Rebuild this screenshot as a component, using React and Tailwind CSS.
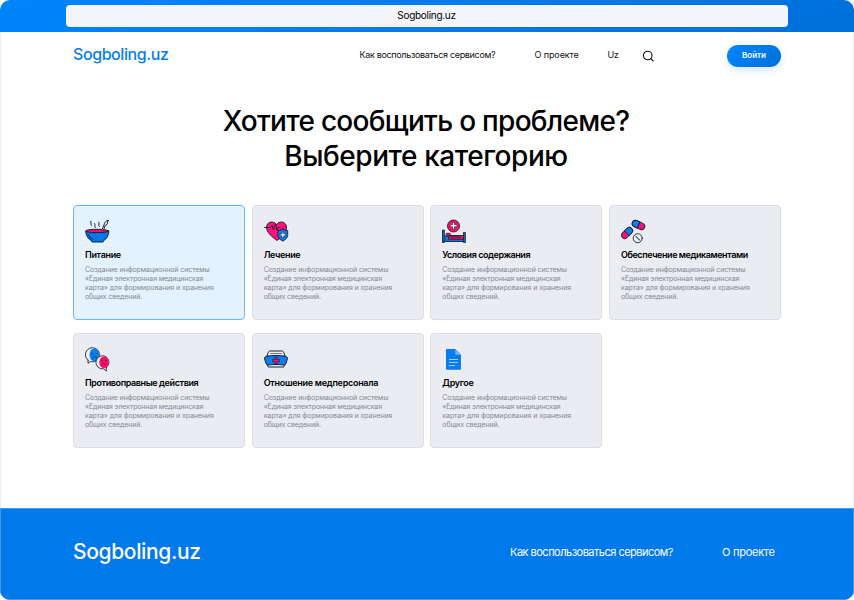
import React from "react";

function BowlIcon() {
  return (
    <svg width="26" height="26" viewBox="0 0 26 26" fill="none" stroke="#16202e" strokeWidth="1" strokeLinecap="round" strokeLinejoin="round">
      <path d="M.7 12.500C1 17 3.500 20.300 6.500 21.700L7 23h11l.5-1.300c3-1.500 5-4.700 5.300-9.200Z" fill="#007AEA" />
      <ellipse cx="12.200" cy="12" rx="11.500" ry="1.700" fill="#FF0F6B" />
      <path d="M5.500 2c2 1-1 2.500 1 4.500M9.500 4.500c2 1-1 2 .8 4M13.500 3c2 1-1 2.500.8 4.500" />
      <path d="M16.800 11 19 6c.5-2.500 2-4.500 4.500-4.700-1 .8-.8 2.700-1.300 3.700-.5 1-1.200 1.500-2 1.500l-1.700 4.500" fill="#EAF4FF" />
      <path d="M3.200 15.500c1 2.500 2.500 3.900 4.500 4.900" />
    </svg>
  );
}

function HeartIcon() {
  return (
    <svg width="26" height="26" viewBox="0 0 26 26" stroke="#16202e" strokeWidth=".9" strokeLinecap="round" strokeLinejoin="round">
      <path d="M12.500 5.500C10 1.500 3 2 2.500 8c-.3 5 5 9.500 10.500 13.500C18.500 18 23 13 22.500 8 22 2 15 1.500 12.500 5.500Z" fill="#FF0F7B" />
      <path d="M.5 8.500h6l1.500-2 1.500 4.500 2-6 1.500 6 1.200-2.500h1.800" fill="none" />
      <path d="M18.800 10c-1.500 1.200-3 1.500-4.900 1.600v5c.4 2.500 2.600 4.500 4.900 5.500 2.300-1 4.500-3 4.900-5.500v-5c-1.900-.1-3.400-.4-4.900-1.600Z" fill="#0A7BE8" />
      <path d="M18 13.200h1.700V15h1.800v1.700h-1.800v1.800H18v-1.800h-1.800V15H18Z" fill="#fff" strokeWidth=".5" />
    </svg>
  );
}

function BedIcon() {
  return (
    <svg width="26" height="26" viewBox="0 0 26 26" stroke="#16202e" strokeWidth=".9" strokeLinejoin="round">
      <circle cx="11.500" cy="7" r="6" fill="#FF0F6B" />
      <path d="M10.500 3.500h2v2.300H15v2h-2.500V10h-2V7.800H8.200v-2h2.300Z" fill="#fff" strokeWidth=".6" />
      <path d="M2.300 17h19.200v5.500H2.300Z" fill="#007AEA" />
      <path d="M.5 11h1.800v12.500H.5ZM21.500 13.500h1.800v10h-1.800Z" fill="#007AEA" />
      <rect x="4" y="14.300" width="4.500" height="2.700" rx="1.200" fill="#FF0F6B" />
      <path d="M7 16.500h14.500v3.700H6.500Z" fill="#FF0F6B" />
      <path d="M8 18h11" fill="none" />
    </svg>
  );
}

function PillsIcon() {
  return (
    <svg width="26" height="26" viewBox="0 0 26 26" stroke="#16202e" strokeWidth=".9" strokeLinecap="round">
      <g transform="rotate(25 17.500 6)">
        <rect x="10.900" y="2.700" width="13.200" height="6.600" rx="3.300" fill="#FF0F7B" />
        <path d="M17.600 2.700v6.600h-3.400a3.300 3.300 0 0 1 0-6.600Z" fill="#087DF0" />
      </g>
      <g transform="rotate(-45 6 14)">
        <rect x="-.6" y="10.700" width="13.200" height="6.600" rx="3.300" fill="#FF0F7B" />
        <path d="M6 10.700h3.300a3.300 3.300 0 0 1 0 6.600H6Z" fill="#087DF0" />
      </g>
      <circle cx="16.700" cy="19.200" r="4.500" fill="#EBEDF2" />
      <path d="m15.200 17.200 3.500 3.500M14.700 17.700l3.500 3.500" fill="none" strokeWidth=".6" />
    </svg>
  );
}

function ChatIcon() {
  return (
    <svg width="26" height="26" viewBox="0 0 26 26" stroke="#16202e" strokeWidth=".9" strokeLinecap="round" strokeLinejoin="round">
      <path d="M3 13.200v3l2.500-1.700a7 7 0 1 0-2.500-1.300Z" fill="#EEF3FA" />
      <ellipse cx="9.300" cy="7.800" rx="4.800" ry="6.400" fill="#087DF0" stroke="none" />
      <path d="m6.500 6 1.500.8m3 0 1.500-.8M7.500 10.500c1.300-1.300 2.900-1.300 4.200 0" fill="none" strokeWidth=".6" />
      <path d="M21.300 20.600V24l-2.500-2.300a6.500 6.500 0 1 1 2.500-1.100Z" fill="#EEF3FA" />
      <ellipse cx="18.900" cy="15.400" rx="4.600" ry="5.900" fill="#FF0F6B" stroke="none" />
      <path d="m15.800 13.300 1.400.8m3 0 1.400-.8M16.700 17.700c1.300-1.200 2.700-1.200 4 0" fill="none" strokeWidth=".6" />
    </svg>
  );
}

function NurseCapIcon() {
  return (
    <svg width="26" height="26" viewBox="0 0 26 26" stroke="#16202e" strokeWidth="1" strokeLinecap="round" strokeLinejoin="round">
      <path d="m3 9 1.300-3.700c.4-1 1-1.300 2-1.300h11.400c1 0 1.600.3 2 1.300L21 9Z" fill="#EEF3FA" />
      <path d="M6.500 6.500h11" fill="none" strokeWidth=".6" />
      <path d="M3 16.500 4.300 20h15.400l1.300-3.500Z" fill="#EEF3FA" />
      <path d="M.5 11.500c0-1.300.8-2 2-2.200 6-1.100 13-1.100 19 0 1.200.2 2 .9 2 2.200l-1.700 5.300c-.3 1-.9 1.300-1.900 1.200-5.300-.6-10.500-.6-15.800 0-1 .1-1.600-.2-1.900-1.200Z" fill="#087DF0" />
      <path d="M11 10.300h2.200v2.200h2.300v2.200h-2.300V17H11v-2.300H8.700v-2.200H11Z" fill="#FF0F6B" strokeWidth=".6" />
    </svg>
  );
}

function FileIcon() {
  return (
    <svg width="26" height="26" viewBox="0 0 26 26">
      <path d="M4 2h9.300L19 7.700V22a.8.8 0 0 1-.8.800H4.800A.8.800 0 0 1 4 22Z" fill="#087DF0" />
      <path d="M13.300 2 19 7.700h-5.700Z" fill="#6BB5FF" />
      <path d="M7 12.500h9M7 15.500h9M7 18.500h5.500" stroke="#9DCEFF" strokeWidth="1" fill="none" />
    </svg>
  );
}

const categories = [
  { title: "Питание", Icon: BowlIcon, track: "tracking-[-0.32px]", active: true },
  { title: "Лечение", Icon: HeartIcon, track: "tracking-[-0.36px]" },
  { title: "Условия содержания", Icon: BedIcon, track: "tracking-[-0.43px]" },
  { title: "Обеспечение медикаментами", Icon: PillsIcon, track: "tracking-[-0.43px]" },
  { title: "Противоправные действия", Icon: ChatIcon, track: "tracking-[-0.4px]" },
  { title: "Отношение медперсонала", Icon: NurseCapIcon, track: "tracking-[-0.28px]" },
  { title: "Другое", Icon: FileIcon, track: "tracking-[-0.3px]" },
];

function CategoryCard({ title, Icon, track, active }) {
  return (
    <div className={`h-[115px] rounded-[4px] border pl-[11px] pt-[13px] ${active ? "border-[#6BB5FA] bg-[#E4F2FE]" : "border-[#DADCE6] bg-[#EBECF2]"}`}>
      <Icon />
      <h2 className={`mt-[4px] whitespace-nowrap text-[9px] font-semibold leading-[12px] text-black ${track}`}>{title}</h2>
      <p className="mt-[4px] whitespace-nowrap text-[7px] leading-[9px] text-[#858993]">
        <span className="block tracking-[-0.09px]">Создание информационной системы</span>
        <span className="block tracking-[-0.14px]">«Единая электронная медицинская</span>
        <span className="block tracking-[-0.08px]">карта» для формирования и хранения</span>
        <span className="block tracking-[-0.13px]">общих сведений.</span>
      </p>
    </div>
  );
}

export default function App() {
  return (
    <div className="h-[600px] w-[854px] bg-white font-['Inter','Noto_Sans',sans-serif]">
      <div className="flex h-full flex-col overflow-hidden rounded-[10px]">
        <div className="flex h-8 shrink-0 justify-center bg-[linear-gradient(165deg,#0085FF_0%,#007AEB_50%,#006FD8_100%)] pt-[5px]">
          <div className="flex h-[22px] w-[722px] items-center justify-center rounded-[4px] bg-[#F4F5FA] pb-px pr-px text-[10px] tracking-[-0.3px] text-black">
            Sogboling.uz
          </div>
        </div>
        <div className="flex-1 border-x border-[#EBECF2]">
          <header className="flex h-[46px] items-center pl-[72px]">
            <div className="w-[286.5px] pb-[2px] text-[16px] font-medium tracking-[-0.42px] text-[#087DEA]">Sogboling.uz</div>
            <nav className="flex items-center text-[9px] text-[#111]">
              <a className="w-[175px] whitespace-nowrap tracking-[-0.33px]">Как воспользоваться сервисом?</a>
              <a className="w-[73px] whitespace-nowrap tracking-[-0.09px]">О проекте</a>
              <a className="w-[34px] tracking-[-0.5px]">Uz</a>
            </nav>
            <svg className="mt-[2px]" width="12" height="12" viewBox="0 0 12 12" fill="none" stroke="#111" strokeWidth="1.100" strokeLinecap="round">
              <circle cx="5.700" cy="5.500" r="4.300" />
              <path d="m8.800 8.600 2.400 2.400" />
            </svg>
            <button className="ml-[73.5px] mt-[2px] h-[22px] w-[54px] rounded-full bg-[linear-gradient(135deg,#0085FF,#006FD8)] pb-[2px] text-[8px] font-semibold text-white shadow-[0_3px_8px_rgba(0,122,235,0.18)]">
              Войти
            </button>
          </header>
          <h1 className="mt-[26px] pr-[2px] text-center text-[28px] font-medium leading-[35px] text-black">
            <span className="block tracking-[-0.72px]">Хотите сообщить о проблеме?</span>
            <span className="block tracking-[-0.44px]">Выберите категорию</span>
          </h1>
          <div className="ml-[72px] mt-[31px] grid w-[708px] grid-cols-[repeat(4,172px)] gap-x-[6.66px] gap-y-[13px]">
            {categories.map((c) => <CategoryCard key={c.title} {...c} />)}
          </div>
        </div>
        <footer className="flex h-[92px] shrink-0 items-center border border-[#3D9AF0] bg-[#007AEB] pb-[4px] pl-[72px] text-white">
          <div className="w-[437px] text-[21px] font-medium tracking-[-0.35px]">Sogboling.uz</div>
          <a className="w-[212px] whitespace-nowrap text-[11px] tracking-[-0.51px]">Как воспользоваться сервисом?</a>
          <a className="whitespace-nowrap text-[11px] tracking-[-0.26px]">О проекте</a>
        </footer>
      </div>
    </div>
  );
}
